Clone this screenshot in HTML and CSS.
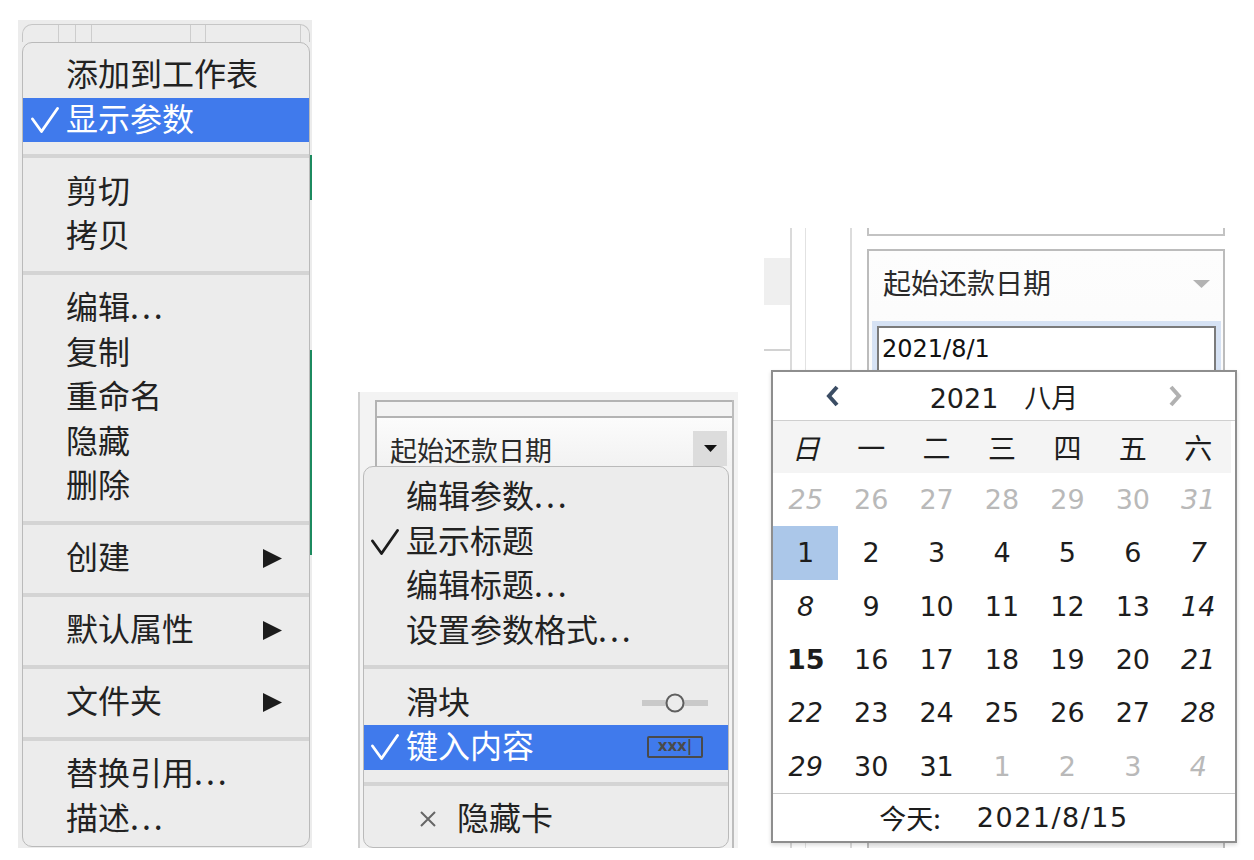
FILE: index.html
```html
<!DOCTYPE html>
<html lang="zh-CN"><head><meta charset="utf-8">
<meta name="viewport" content="width=device-width, initial-scale=1">
<title>参数控件</title>
<link rel="stylesheet" href="styles.css">
</head>
<body>
<div class="canvas">

  <!-- 工作表参数的右键菜单 -->
  <div class="shot shot-menu">
    <div class="ghost">
      <span class="tick t1"></span><span class="tick t2"></span><span class="tick t3"></span>
      <span class="tick t4"></span><span class="tick t5"></span><span class="tick t6"></span>
    </div>
    <div class="menu menu-big">
      <div class="item"><span class="mark"></span>添加到工作表</div>
      <div class="item on"><span class="mark"><svg width="28" height="26" viewBox="0 0 28 26"><polyline points="1.5,12 10.5,24.5 26.5,1.5" fill="none" stroke="#fff" stroke-width="2.8" stroke-linecap="round" stroke-linejoin="round"/></svg></span>显示参数</div>
      <div class="sep"></div>
      <div class="item"><span class="mark"></span>剪切</div>
      <div class="item"><span class="mark"></span>拷贝</div>
      <div class="sep"></div>
      <div class="item"><span class="mark"></span>编辑<span class="dots">...</span></div>
      <div class="item"><span class="mark"></span>复制</div>
      <div class="item"><span class="mark"></span>重命名</div>
      <div class="item"><span class="mark"></span>隐藏</div>
      <div class="item"><span class="mark"></span>删除</div>
      <div class="sep"></div>
      <div class="item"><span class="mark"></span>创建<span class="sub"><svg width="19" height="19" viewBox="0 0 19 19"><polygon points="0,0 19,9.5 0,19" fill="#1c1c1c"/></svg></span></div>
      <div class="sep"></div>
      <div class="item"><span class="mark"></span>默认属性<span class="sub"><svg width="19" height="19" viewBox="0 0 19 19"><polygon points="0,0 19,9.5 0,19" fill="#1c1c1c"/></svg></span></div>
      <div class="sep"></div>
      <div class="item"><span class="mark"></span>文件夹<span class="sub"><svg width="19" height="19" viewBox="0 0 19 19"><polygon points="0,0 19,9.5 0,19" fill="#1c1c1c"/></svg></span></div>
      <div class="sep"></div>
      <div class="item"><span class="mark"></span>替换引用<span class="dots">...</span></div>
      <div class="item"><span class="mark"></span>描述<span class="dots">...</span></div>
    </div>
  </div>

  <!-- 参数卡片上的下拉菜单 -->
  <div class="shot shot-param">
    <div class="p2-col">
      <div class="prev"></div>
      <div class="card">
        <span class="card-title">起始还款日期</span>
        <span class="drop"><svg width="13" height="7" viewBox="0 0 13 7"><polygon points="0,0 13,0 6.5,7" fill="#111"/></svg></span>
      </div>
      <div class="menu menu-param">
        <div class="item"><span class="mark"></span>编辑参数<span class="dots">...</span></div>
        <div class="item"><span class="mark"><svg width="28" height="26" viewBox="0 0 28 26"><polyline points="1.5,12 10.5,24.5 26.5,1.5" fill="none" stroke="#1c1c1c" stroke-width="2.8" stroke-linecap="round" stroke-linejoin="round"/></svg></span>显示标题</div>
        <div class="item"><span class="mark"></span>编辑标题<span class="dots">...</span></div>
        <div class="item"><span class="mark"></span>设置参数格式<span class="dots">...</span></div>
        <div class="sep"></div>
        <div class="item"><span class="mark"></span>滑块<span class="icon-slider"><svg width="66" height="22" viewBox="0 0 66 22"><rect x="0" y="8" width="66" height="6" fill="#c9c9c9"/><circle cx="33" cy="11" r="8.5" fill="#ececec" stroke="#5f5f5f" stroke-width="2"/></svg></span></div>
        <div class="item on"><span class="mark"><svg width="28" height="26" viewBox="0 0 28 26"><polyline points="1.5,12 10.5,24.5 26.5,1.5" fill="none" stroke="#fff" stroke-width="2.8" stroke-linecap="round" stroke-linejoin="round"/></svg></span>键入内容<span class="icon-type">xxx|</span></div>
        <div class="sep"></div>
        <div class="item"><span class="mark"></span><span class="x-mark"><svg width="18" height="18" viewBox="0 0 18 18"><path d="M2 2 L16 16 M16 2 L2 16" stroke="#666" stroke-width="2"/></svg></span>隐藏卡</div>
      </div>
    </div>
  </div>

  <!-- 日期参数与日历弹出框 -->
  <div class="shot shot-date">
    <div class="strip">
      <div class="s1"><div class="blk"></div><div class="hline"></div></div>
      <div class="s2"></div>
      <div class="s3"></div>
      <div class="s4"></div>
    </div>
    <div class="dcol">
      <div class="prev3"></div>
      <div class="card3">
        <div class="card3-title">
          <span>起始还款日期</span>
          <svg width="17" height="8" viewBox="0 0 17 8"><polygon points="0,0 17,0 8.5,8" fill="#b3b3b3"/></svg>
        </div>
        <div class="date-input">2021/8/1</div>
        <div class="knob"></div>
      </div>
    </div>

    <div class="cal">
      <div class="cal-head">
        <svg width="16" height="22" viewBox="0 0 16 22"><polyline points="12,2 4,11 12,20" fill="none" stroke="#3b4d64" stroke-width="4"/></svg>
        <span class="cal-title"><span class="num">2021</span><span class="month">八月</span></span>
        <svg width="16" height="22" viewBox="0 0 16 22"><polyline points="4,2 12,11 4,20" fill="none" stroke="#b1b1b1" stroke-width="4"/></svg>
      </div>
      <div class="cal-week">
        <span class="it">日</span><span>一</span><span>二</span><span>三</span><span>四</span><span>五</span><span>六</span>
      </div>
      <div class="cal-days">
        <span class="out it">25</span><span class="out">26</span><span class="out">27</span><span class="out">28</span><span class="out">29</span><span class="out">30</span><span class="out it">31</span>
        <span class="sel">1</span><span>2</span><span>3</span><span>4</span><span>5</span><span>6</span><span class="it">7</span>
        <span class="it">8</span><span>9</span><span>10</span><span>11</span><span>12</span><span>13</span><span class="it">14</span>
        <span class="today">15</span><span>16</span><span>17</span><span>18</span><span>19</span><span>20</span><span class="it">21</span>
        <span class="it">22</span><span>23</span><span>24</span><span>25</span><span>26</span><span>27</span><span class="it">28</span>
        <span class="it">29</span><span>30</span><span>31</span><span class="out">1</span><span class="out">2</span><span class="out">3</span><span class="out it">4</span>
      </div>
      <div class="cal-foot">
        <span class="today-label">今天:</span><span class="num foot-date">2021/8/15</span>
      </div>
    </div>
  </div>

</div>
</body>
</html>
```

FILE: styles.css
```css
body {
  margin: 0;
  background: #fff;
  font-family: "Noto Sans CJK SC", "Noto Sans", sans-serif;
  color: #222;
}

.canvas {
  display: flex;
  align-items: flex-end;
  height: 848px;
  padding-left: 18px;
}

.shot {
  flex: none;
  box-sizing: border-box;
}

/* ---- left: sheet menu ---- */

.shot-menu {
  width: 294px;
  height: 828px;
  margin-right: 46px;
  padding-top: 4px;
  background-color: #ececec;
  background-image: linear-gradient(#1c8a5f, #1c8a5f), linear-gradient(#1c8a5f, #1c8a5f);
  background-size: 2px 45px, 2px 205px;
  background-position: right 0 top 135px, right 0 top 330px;
  background-repeat: no-repeat;
}

.ghost {
  display: flex;
  height: 18px;
  margin: 0 2px 0 4px;
  border: 1px solid #c6c6c6;
  border-bottom: 0;
  border-radius: 10px 10px 0 0;
  box-sizing: border-box;
}

.tick {
  width: 0;
  border-left: 1px solid #cdcdcd;
}
.t1 { margin-left: 35px; }
.t2 { margin-left: 16px; }
.t3 { margin-left: 15px; }
.t4 { margin-left: 98px; }
.t5 { margin-left: 14px; }
.t6 { margin-left: 94px; }

.menu {
  background: #ececec;
  border: 1px solid #bababa;
  border-radius: 10px;
  box-sizing: border-box;
}

.menu-big {
  margin: 0 2px 0 4px;
  padding: 10px 0 5px;
}

.item {
  display: flex;
  align-items: center;
  height: 44.5px;
  padding-bottom: 6px;
  box-sizing: border-box;
  line-height: 38.5px;
  font-size: 32px;
  white-space: nowrap;
}

.item.on {
  background: #407aec;
  color: #fff;
}

.mark {
  display: flex;
  justify-content: center;
  align-items: center;
  flex: none;
  width: 43px;
  height: 100%;
  margin-bottom: -6px;
}

.dots {
  letter-spacing: 3px;
}

.sub {
  display: flex;
  margin-left: auto;
  margin-right: 27px;
  margin-bottom: -6px;
}

.sep {
  height: 4px;
  margin: 12px 0 11.5px;
  background: #d4d4d4;
}

/* ---- middle: parameter card menu ---- */

.shot-param {
  width: 380px;
  height: 456px;
  margin-right: 26px;
  padding-top: 8px;
  overflow: hidden;
  background: #f3f3f3;
  border-left: 2px solid #cfcfcf;
}

.p2-col {
  width: 359px;
  height: 100%;
  margin-left: 15px;
  box-sizing: border-box;
  border-right: 2px solid #bdbdbd;
}

.prev {
  height: 16px;
  border-top: 2px solid #b3b3b3;
  border-left: 2px solid #b3b3b3;
  box-sizing: border-box;
}

.card {
  display: flex;
  justify-content: space-between;
  height: 50px;
  padding: 0 5px 0 13px;
  border-top: 2px solid #b3b3b3;
  border-left: 2px solid #b3b3b3;
  box-sizing: border-box;
  background: linear-gradient(#fcfcfc, #f2f2f2);
}

.card-title {
  margin-top: 15px;
  font-size: 27px;
  line-height: 34px;
  color: #2a2a2a;
}

.drop {
  display: flex;
  justify-content: center;
  align-items: center;
  width: 34px;
  height: 35px;
  margin-top: 13px;
  background: #dcdcdc;
}

.menu-param {
  width: 366px;
  margin-left: -12px;
  padding: 8px 0 5px;
}

.menu-param .mark {
  width: 42px;
}

.icon-slider {
  display: flex;
  margin-left: auto;
  margin-right: 20px;
  margin-bottom: -6px;
}

.icon-type {
  margin: 0 25px -6px auto;
  width: 56px;
  height: 22px;
  box-sizing: border-box;
  border: 2px solid #4a4a4a;
  border-radius: 2px;
  font-family: "DejaVu Sans", sans-serif;
  font-size: 15px;
  font-weight: bold;
  line-height: 17px;
  text-align: center;
  color: #4a4a4a;
}

.x-mark {
  display: flex;
  margin: 0 20px -6px 13px;
}

/* ---- right: date parameter + calendar ---- */

.shot-date {
  position: relative;
  display: flex;
  width: 476px;
  height: 620px;
  background: #fff;
}

.strip {
  display: flex;
  flex: none;
  width: 103px;
}

.s1 {
  width: 26px;
  border-right: 2px solid #dadada;
}

.blk {
  height: 47px;
  margin-top: 30px;
  background: #efefef;
}

.hline {
  margin-top: 44px;
  border-top: 2px solid #d2d2d2;
}

.s2 {
  width: 13px;
  border-right: 1px solid #e2e2e2;
}

.s3 {
  width: 44px;
  border-right: 2px solid #dcdcdc;
}

.s4 {
  width: 15px;
}

.dcol {
  flex: none;
  width: 358px;
}

.prev3 {
  height: 6px;
  border: 2px solid #c3c3c3;
  border-top: 0;
}

.card3 {
  height: 601px;
  margin-top: 13px;
  box-sizing: border-box;
  border: 2px solid #bcbcbc;
  border-bottom: 0;
  background: linear-gradient(#fdfdfd, #f3f3f3);
}

.card3-title {
  display: flex;
  justify-content: space-between;
  align-items: center;
  height: 68px;
  padding: 0 13px 6px 14px;
  box-sizing: border-box;
  font-size: 28px;
  color: #2a2a2a;
}

.card3-title svg {
  margin-bottom: -4px;
}

.date-input {
  height: 56px;
  margin: 7px 7px 0 8px;
  padding-left: 3px;
  border: 2px solid #7b7b7b;
  box-shadow: 0 0 0 5px #d6e2f4;
  background: #fff;
  font-family: "DejaVu Sans", sans-serif;
  font-size: 24px;
  line-height: 42px;
  color: #111;
}

.knob {
  width: 35px;
  height: 6px;
  margin: 465px 0 0 14px;
  border-radius: 3px 3px 0 0;
  background: #6a6a6a;
}

.cal {
  position: absolute;
  left: 7px;
  top: 142px;
  width: 466px;
  height: 473px;
  box-sizing: border-box;
  border: 2px solid #8e8e8e;
  background: #fff;
  box-shadow: 0 2px 4px rgba(0, 0, 0, 0.15);
}

.num {
  font-family: "DejaVu Sans", sans-serif;
}

.cal-head {
  display: flex;
  justify-content: space-between;
  align-items: center;
  height: 48px;
  padding: 0 52px;
  border-bottom: 1px solid #cfcfcf;
  font-size: 27px;
  color: #1d1d1d;
}

.month {
  margin-left: 26px;
}

.cal-week,
.cal-days {
  display: grid;
  grid-template-columns: repeat(7, 1fr);
  width: 458px;
}

.cal-week {
  height: 52px;
  align-items: center;
  background: #f4f4f4;
  text-align: center;
  font-size: 28px;
  color: #1d1d1d;
}

.cal-days {
  grid-auto-rows: 53.33px;
  font-family: "DejaVu Sans", sans-serif;
  font-size: 27px;
  color: #1d1d1d;
}

.cal-days span {
  display: flex;
  justify-content: center;
  align-items: center;
}

.it {
  font-style: italic;
}

.cal-days .out {
  color: #b9b9b9;
}

.cal-days .sel {
  background: #abc7e9;
}

.cal-days .today {
  font-weight: bold;
}

.cal-foot {
  display: flex;
  justify-content: center;
  align-items: center;
  height: 47px;
  border-top: 1px solid #cacaca;
  font-size: 27px;
  color: #1d1d1d;
}

.today-label {
  margin-right: 36px;
}

.foot-date {
  letter-spacing: 1.5px;
}
```
